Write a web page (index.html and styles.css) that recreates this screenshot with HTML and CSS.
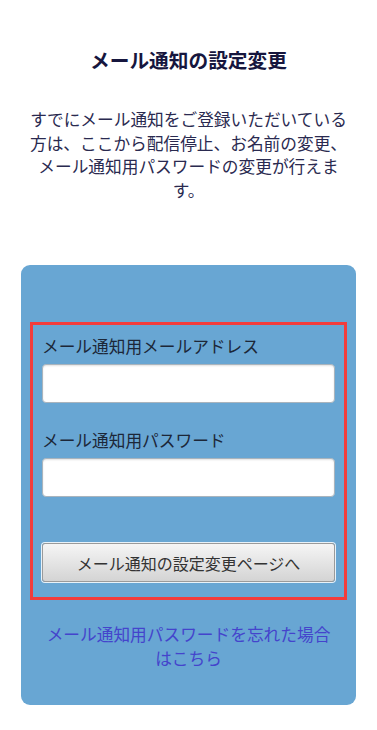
FILE: index.html
```html
<!DOCTYPE html>
<html lang="ja">
<head>
<meta charset="utf-8">
<meta name="viewport" content="width=device-width, initial-scale=1">
<title>メール通知の設定変更</title>
<link rel="stylesheet" href="styles.css">
</head>
<body>
<main class="page">
  <h1 class="title">メール通知の設定変更</h1>
  <p class="lead">すでにメール通知をご登録いただいている方は、ここから配信停止、お名前の変更、メール通知用パスワードの変更が行えます。</p>
  <section class="card">
    <form class="login-box">
      <label class="field-label" for="mail">メール通知用メールアドレス</label>
      <input class="field-input" id="mail" type="email">
      <label class="field-label second" for="pass">メール通知用パスワード</label>
      <input class="field-input" id="pass" type="password">
      <button class="submit" type="button">メール通知の設定変更ページへ</button>
    </form>
    <p class="forgot"><a href="#" class="forgot-link">メール通知用パスワードを忘れた場合はこちら</a></p>
  </section>
</main>
</body>
</html>
```
FILE: styles.css
```css
html, body {
  margin: 0;
  padding: 0;
  background: #ffffff;
}
body {
  font-family: "Noto Sans CJK JP", "Noto Sans", sans-serif;
  color: #2a2a50;
}
.page {
  padding: 46px 20px 24px;
}
.title {
  margin: 0;
  font-size: 19.7px;
  line-height: 28px;
  font-weight: 700;
  text-align: center;
  color: #16163e;
}
.lead {
  margin: 34px 6px 0;
  font-size: 16.7px;
  line-height: 23.5px;
  text-align: center;
  color: #2a2a50;
}
.card {
  margin: 63px 1px 0;
  background: #68a6d3;
  border-radius: 9px;
  padding: 57px 9px 35px;
}
.login-box {
  display: flex;
  flex-direction: column;
  border: 3px solid #f23c3c;
  padding: 8.5px 9px 15px;
}
.field-label {
  font-size: 16.7px;
  line-height: 24px;
  color: #1c2738;
  margin-bottom: 6.5px;
}
.field-label.second {
  margin-top: 24.5px;
}
.field-input {
  box-sizing: border-box;
  height: 39px;
  width: 100%;
  margin: 0;
  border: 1px solid #a9b4bd;
  border-radius: 4px;
  background: #ffffff;
  box-shadow: inset 0 1px 2px rgba(0,0,0,0.12);
}
.submit {
  box-sizing: border-box;
  margin-top: 46px;
  height: 39px;
  width: 100%;
  border: 1px solid #9a9a9a;
  border-radius: 3px;
  background: linear-gradient(#f5f5f5, #d4d4d4);
  box-shadow: 0 0 0 1px rgba(255,255,255,0.85);
  font-family: inherit;
  font-size: 16px;
  color: #333333;
  cursor: pointer;
}
.forgot {
  margin: 22px 11px 0;
  font-size: 16.7px;
  line-height: 24px;
  text-align: center;
}
.forgot-link {
  color: #4444cc;
  text-decoration: none;
}
```
